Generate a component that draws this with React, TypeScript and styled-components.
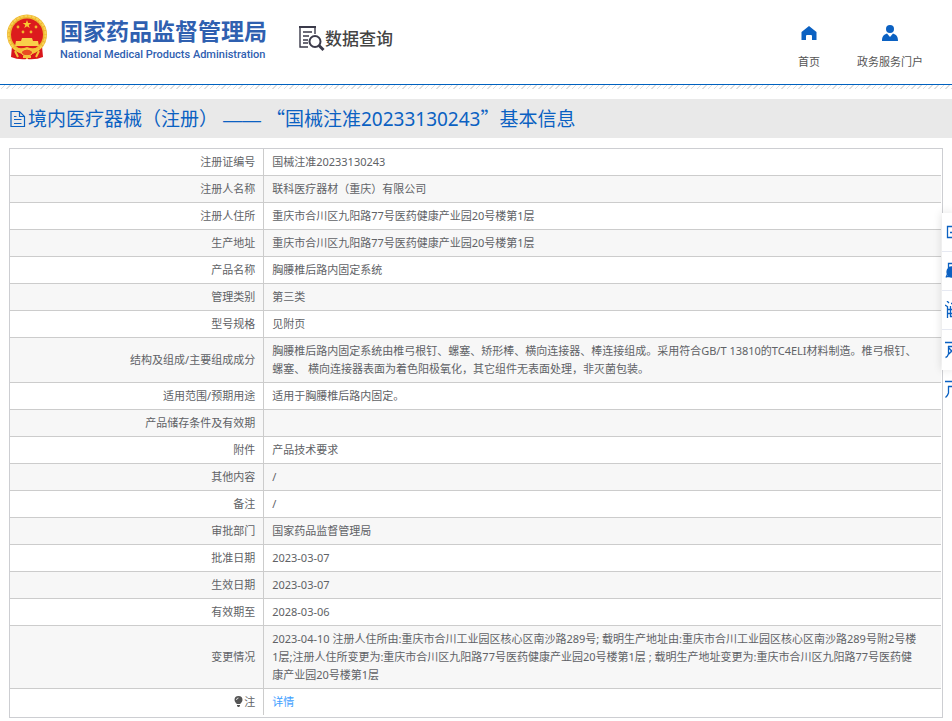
import React from "react";
import styled, { createGlobalStyle } from "styled-components";

const Global = createGlobalStyle`
  * { box-sizing: border-box; }
  html { overflow: hidden; }
  body {
    margin: 0;
    background: #fff;
    color: #606266;
    font: 11px/18px "Noto Sans", "Noto Sans CJK SC", sans-serif;
  }
`;

const Header = styled.header`
  display: flex;
  align-items: center;
  height: 84px;
  padding: 0 29px 0 6px;
`;

const Brand = styled.a`
  display: flex;
  align-items: center;
  gap: 12px;
  height: 60px;
  margin-bottom: 10px;
  color: #2f60b0;
  text-decoration: none;
`;

const BrandText = styled.span`
  display: flex;
  flex-direction: column;
  padding-top: 2px;
  white-space: nowrap;
`;

const BrandName = styled.strong`
  font: 700 23px/34px "Noto Sans CJK SC", sans-serif;
`;

const BrandEnglish = styled.span`
  font: 500 11px/16px Roboto, sans-serif;
`;

const QueryLink = styled.a`
  display: flex;
  align-items: center;
  margin: 0 auto 8px 31px;
  color: #444;
  font: 500 17px/26px "Noto Sans CJK SC", sans-serif;
  text-decoration: none;
  white-space: nowrap;
`;

const Nav = styled.nav`
  display: flex;
  gap: 37px;
  padding-top: 12px;
`;

const NavLink = styled.a`
  display: flex;
  flex-direction: column;
  align-items: center;
  gap: 12px;
  color: #555;
  text-decoration: none;
  white-space: nowrap;

  svg { color: #0b61c2; }
`;

const Hatch = styled.div`
  height: 5px;
  border-top: 1px solid #0061bf;
  background: repeating-linear-gradient(135deg, #fff 0 3px, #dedede 3px 4px);
`;

const TitleBar = styled.h1`
  display: flex;
  align-items: center;
  height: 39px;
  margin: 10px 0;
  padding-left: 9px;
  background: #e9e9e9;
  color: #0b61c2;
  font: 400 19px/38px "Noto Sans", "Noto Sans CJK SC", sans-serif;
  white-space: pre;

  svg { margin-right: 2px; }
`;

const WideMark = styled.span`
  font-family: "Noto Sans CJK SC", sans-serif;
`;

const Dash = styled.span`
  font-family: "Liberation Sans", sans-serif;
`;

const Frame = styled.main`
  margin: 0 9px;
  padding: 0 1px 2px 0;
  border: 1px solid #cdced2;
`;

const Table = styled.table`
  width: 100%;
  border-collapse: separate;
  border-spacing: 0;
`;

const Row = styled.tr`
  background: #fff;
  &:nth-child(even) { background: #f7f7f7; }
  & + & > * { border-top: 1px solid #ccc; }
`;

const Label = styled.th`
  width: 27.3%;
  padding: 4px 8px;
  border-right: 1px solid #ccc;
  font-weight: 400;
  text-align: right;

  svg { margin-right: 1px; vertical-align: -1px; }
`;

const Value = styled.td`
  padding: 4px 8px;
`;

const DetailLink = styled.a`
  color: #409eff;
  text-decoration: none;
`;

const SideBar = styled.aside`
  position: fixed;
  top: 213px;
  right: 0;
  width: 10px;
  height: 157px;
  background: #fff;
  box-shadow: 0 0 10px rgba(0, 0, 0, 0.14);
`;

const SideButton = styled.button`
  display: block;
  width: 10px;
  height: 39px;
  padding: 0 0 0 3px;
  overflow: hidden;
  border: 0;
  border-bottom: 1px solid #e6e9f2;
  background: none;
  color: #0b61c2;

  svg { display: block; }
  &:nth-child(n + 4) { border-bottom: 0; }
`;

const Emblem = () => (
  <svg width="42" height="46" viewBox="0 0 42 46" aria-hidden="true">
    <path d="M6 32 5 43q7 3 16 2 9 1 16-2l-1-11z" fill="#d9161b" />
    <circle cx="21" cy="20.500" r="20" fill="#edb52f" />
    <circle cx="21" cy="20.500" r="18.500" fill="none" stroke="#f8d254" strokeWidth="2" strokeDasharray="3 1" />
    <circle cx="21" cy="20.500" r="16" fill="#dc1b1d" />
    <path d="m21 6 1.100 3h3.200l-2.600 2 1 3-2.700-1.800-2.700 1.800 1-3-2.600-2h3.200z" fill="#f9cb32" />
    <g fill="#f3b52d">
      <circle cx="12" cy="13" r="1.400" />
      <circle cx="30" cy="13" r="1.400" />
      <circle cx="17" cy="18" r="1.400" />
      <circle cx="25" cy="18" r="1.400" />
    </g>
    <path d="M16 24h10l1 3h5l1 5H9l1-5h5z" fill="#f9cf4a" />
    <path d="M7 32q7 4 14 1 7 3 14-1-4 7-10 8-4-3-8 0-7-2-10-8z" fill="#f4c13a" />
    <path d="M15 38q6-6 12 0-1 4-6 4t-6-4z" fill="#e94b22" stroke="#f9cf4a" />
    <path d="m9 37 3 6m21-6-3 6M21 41v4M17 43h8" stroke="#f4c13a" strokeWidth="2" />
  </svg>
);

const QueryIcon = () => (
  <svg width="27" height="27" viewBox="0 0 27 27" fill="none" stroke="#3b3a4a" aria-hidden="true">
    <path d="M17 9V2H2v20h8" strokeWidth="1.400" />
    <path d="M1 2h17" strokeWidth="2" />
    <path d="M5 7h9M5 11h6M5 15h5M5 18h5" strokeWidth="1.500" />
    <circle cx="17" cy="16.500" r="5.500" strokeWidth="2" />
    <path d="m21 20.500 4.500 4.500" strokeWidth="3" />
  </svg>
);

const HomeIcon = () => (
  <svg width="16" height="16" viewBox="0 0 16 16" fill="currentColor" aria-hidden="true">
    <path d="M8 1 .5 7v8H5v-4q0-1 1-1h4q1 0 1 1v4h4.500V7z" />
  </svg>
);

const UserIcon = () => (
  <svg width="16" height="16" viewBox="0 0 16 16" fill="currentColor" aria-hidden="true">
    <circle cx="8" cy="4" r="4" />
    <path d="M0 16c0-5 2-6.500 5-7.500L8 12l3-3.500c3 1 5 2.500 5 7.500z" />
  </svg>
);

const DocIcon = () => (
  <svg width="17" height="18" viewBox="0 0 17 18" fill="none" stroke="currentColor" aria-hidden="true">
    <path d="M2 1.500h8.500l5 5v10H2zM10.500 1.500v5h5" strokeWidth="1.200" />
    <path d="M5 6.500h2.500M5 9.500h7.500M5 13.500h7.500" />
  </svg>
);

const BulbIcon = () => (
  <svg width="9" height="11" viewBox="0 0 9 11" aria-hidden="true">
    <path d="M4.500 0A4 4 0 0 0 .5 4c0 2 2 3 2.200 4h3.600c.2-1 2.200-2 2.200-4a4 4 0 0 0-4-4zM3 9h3v1L5 11H4L3 10z" fill="#555" />
    <path d="M2.500 4q0-2 2-2" stroke="#ddd" fill="none" />
  </svg>
);

const sideIcons = [
  { name: "查询", path: "M9 3.500H2.500v11H9M5 9.500h4" },
  { name: "服务", path: "M9 1.500H3.500v5q0 5-2.500 9M4 5.500h6M1 14.500h8" },
  { name: "问卷", path: "m2 0 2 2M6 2.500h4M0 4l3 2M2.500 6v11M5.500 5v11M2 8.500h7M2 12.500h7M5 15.500h4M8.500 5v11" },
  { name: "反馈", path: "M0 1.500h9M3.500 5v8q-1 3-3 3.500M3 5.500h6M4 7l5 6M9 7l-5 6" },
  { name: "页首", path: "M0 1.500h9M3.500 6v7q-1 3-3 4.500M3 6.500h6" },
];

const records: [string, React.ReactNode][] = [
  ["注册证编号", "国械注准20233130243"],
  ["注册人名称", "联科医疗器材（重庆）有限公司"],
  ["注册人住所", "重庆市合川区九阳路77号医药健康产业园20号楼第1层"],
  ["生产地址", "重庆市合川区九阳路77号医药健康产业园20号楼第1层"],
  ["产品名称", "胸腰椎后路内固定系统"],
  ["管理类别", "第三类"],
  ["型号规格", "见附页"],
  [
    "结构及组成/主要组成成分",
    <>胸腰椎后路内固定系统由椎弓根钉、螺塞、矫形棒、横向连接器、棒连接组成。采用符合GB/T 13810的TC4ELI材料制造。椎弓根钉、<br />螺塞、 横向连接器表面为着色阳极氧化，其它组件无表面处理，非灭菌包装。</>,
  ],
  ["适用范围/预期用途", "适用于胸腰椎后路内固定。"],
  ["产品储存条件及有效期", ""],
  ["附件", "产品技术要求"],
  ["其他内容", "/"],
  ["备注", "/"],
  ["审批部门", "国家药品监督管理局"],
  ["批准日期", "2023-03-07"],
  ["生效日期", "2023-03-07"],
  ["有效期至", "2028-03-06"],
  [
    "变更情况",
    <>2023-04-10 注册人住所由:重庆市合川工业园区核心区南沙路289号; 载明生产地址由:重庆市合川工业园区核心区南沙路289号附2号楼<br />1层;注册人住所变更为:重庆市合川区九阳路77号医药健康产业园20号楼第1层 ; 载明生产地址变更为:重庆市合川区九阳路77号医药健<br />康产业园20号楼第1层</>,
  ],
];

export default function App() {
  return (
    <>
      <Global />
      <Header>
        <Brand href="#">
          <Emblem />
          <BrandText>
            <BrandName>国家药品监督管理局</BrandName>
            <BrandEnglish>National Medical Products Administration</BrandEnglish>
          </BrandText>
        </Brand>
        <QueryLink href="#">
          <QueryIcon />
          数据查询
        </QueryLink>
        <Nav>
          <NavLink href="#"><HomeIcon />首页</NavLink>
          <NavLink href="#"><UserIcon />政务服务门户</NavLink>
        </Nav>
      </Header>
      <Hatch />
      <TitleBar>
        <DocIcon />
        <span>境内医疗器械（注册） <Dash>——</Dash> <WideMark>“</WideMark>国械注准20233130243<WideMark>”</WideMark>基本信息</span>
      </TitleBar>
      <Frame>
        <Table>
          <tbody>
            {records.map(([label, value]) => (
              <Row key={label}>
                <Label scope="row">{label}</Label>
                <Value>{value}</Value>
              </Row>
            ))}
            <Row>
              <Label scope="row"><BulbIcon />注</Label>
              <Value><DetailLink href="#">详情</DetailLink></Value>
            </Row>
          </tbody>
        </Table>
      </Frame>
      <SideBar>
        {sideIcons.map((icon) => (
          <SideButton key={icon.name} type="button" aria-label={icon.name}>
            <svg width="9" height="18" viewBox="0 0 9 18" fill="none" stroke="currentColor" strokeWidth="1.300" aria-hidden="true">
              <path d={icon.path} />
              {icon.name === "服务" && <circle cx="7" cy="10" r="5" fill="currentColor" />}
            </svg>
          </SideButton>
        ))}
      </SideBar>
    </>
  );
}
